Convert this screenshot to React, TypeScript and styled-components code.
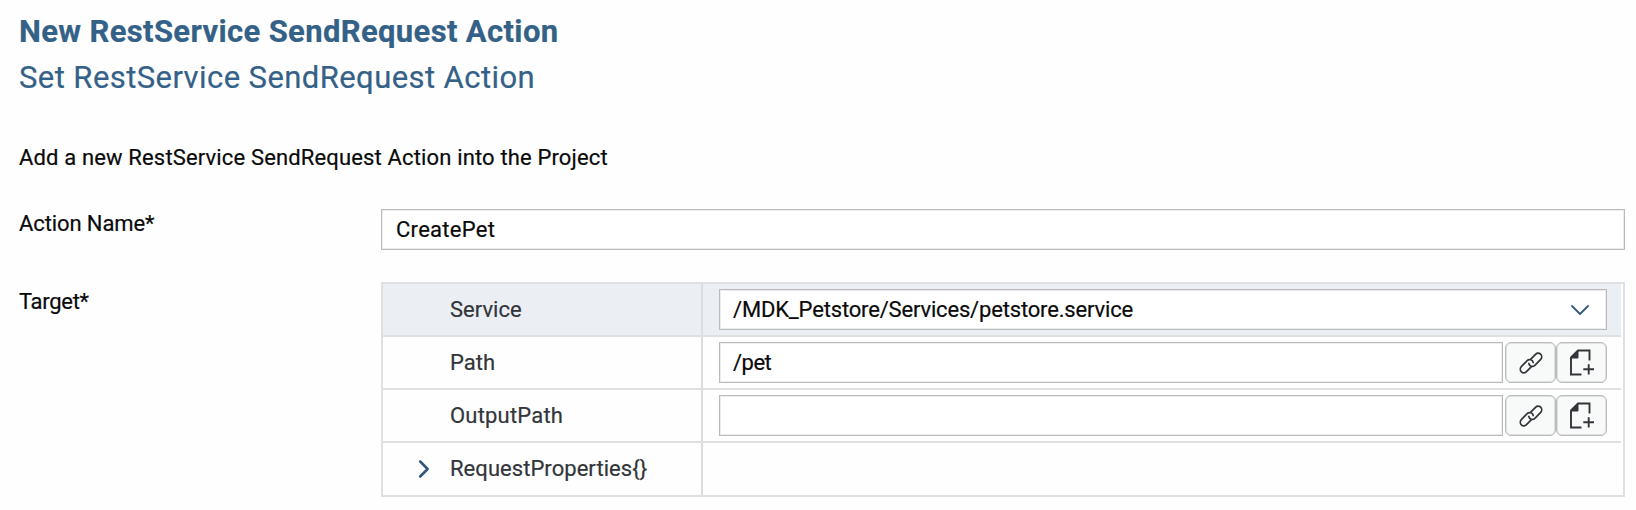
import React from "react";
import styled, { createGlobalStyle } from "styled-components";

const GlobalStyle = createGlobalStyle`
  *, *::before, *::after { box-sizing: border-box; }
  body { margin: 0; background: #fff; }
`;

const Page = styled.main`
  width: 1636px;
  height: 510px;
  padding: 14px 11px 0 19px;
  overflow: hidden;
  background: #fefefe;
  color: #0a0a0a;
  font-family: Roboto, "Liberation Sans", sans-serif;
  font-size: 22px;
  line-height: 26px;
  -webkit-text-stroke: 0.2px currentColor;
`;

const Heading = styled.h1<{ $bold?: boolean; $spacing?: number }>`
  width: max-content;
  margin: 0;
  color: #346187;
  font-size: 31px;
  line-height: 36px;
  font-weight: ${(p) => (p.$bold ? 700 : 400)};
  letter-spacing: ${(p) => p.$spacing ?? 0}px;
  & + & { margin-top: 10px; }
`;

const Label = styled.span<{ $spacing?: number }>`
  display: inline-block;
  white-space: pre;
  letter-spacing: ${(p) => p.$spacing ?? 0}px;
`;

const Description = styled.p`
  margin: 49px 0 0;
`;

const FormRow = styled.div<{ $gap: number }>`
  display: grid;
  grid-template-columns: 362px 1244px;
  align-items: start;
  margin-top: ${(p) => p.$gap}px;
`;

const Caption = styled.div<{ $top: number }>`
  padding-top: ${(p) => p.$top}px;
`;

const Field = styled.div<{ $indent?: number }>`
  display: flex;
  flex: 1;
  align-items: center;
  justify-content: space-between;
  height: 41px;
  padding: 0 17px 0 ${(p) => p.$indent ?? 13}px;
  border: 1px solid #b9bbbc;
  box-shadow: inset 0 0 0 1px #ececec;
  background: #fff;
`;

const Table = styled.div`
  margin-top: 1px;
  border: 2px solid #dfe0e1;
  height: 215px;
`;

const Row = styled.div<{ $active?: boolean }>`
  display: grid;
  grid-template-columns: 318px 1fr;
  width: 1238px;
  height: 53px;
  border-bottom: 2px solid #dfe0e1;
  background: ${(p) => (p.$active ? "#ebeff4" : "transparent")};
  &:last-child { height: 52px; border-bottom: 0; }
`;

const NameCell = styled.div`
  display: grid;
  grid-template-columns: 67px auto;
  align-items: center;
  justify-content: start;
  color: #32363a;
`;

const ValueCell = styled.div`
  display: flex;
  align-items: center;
  padding: 0 14px 0 16px;
  border-left: 2px solid #dcdddf;
`;

const Tools = styled.div`
  display: flex;
  margin-left: 2px;
`;

const ToolButton = styled.button`
  display: grid;
  place-items: center;
  width: 51px;
  height: 41px;
  padding: 0;
  border: 1px solid #b9bbbc;
  border-radius: 6px;
  box-shadow: inset 0 0 0 1px #dfe0e0;
  background: #f8faf9;
`;

const Expander = styled.span`
  display: flex;
  padding-left: 35px;
`;

const LinkIcon = () => (
  <svg width="26" height="26" viewBox="-13 -13 26 26" fill="none" stroke="#32363a" strokeWidth="1.7" strokeLinecap="round">
    <g transform="rotate(-46)">
      <path d="M2.6 -2.8H9.4A3.6 3.6 0 0 1 9.4 4.4H1A3.6 3.6 0 0 1 -1.9 -1.3" />
      <path d="M-2.6 2.8H-9.4A3.6 3.6 0 0 1 -9.4 -4.4H-1A3.6 3.6 0 0 1 1.9 1.3" />
    </g>
  </svg>
);

const AddDocumentIcon = () => (
  <svg width="26" height="27" viewBox="0 0 26 27" fill="none" stroke="#32363a" strokeWidth="1.9">
    <path d="M12.5 25.5H2V8.5L9 1.5H20.5V11.5M14.3 20.3H25M19.7 15.2V25.4" />
    <path d="M2 9L9 1.8V9Z" fill="#32363a" strokeWidth="1" />
  </svg>
);

const ChevronDown = () => (
  <svg width="18" height="10" viewBox="0 0 18 10" fill="none" stroke="#33597d" strokeWidth="1.8" strokeLinecap="round" strokeLinejoin="round">
    <path d="M1 1L9 9L17 1" />
  </svg>
);

const ChevronRight = () => (
  <svg width="12" height="18" viewBox="0 0 12 18" fill="none" stroke="#2f567b" strokeWidth="2.5" strokeLinecap="round" strokeLinejoin="round">
    <path d="M2.2 1.5L9.6 9L2.2 16.5" />
  </svg>
);

const LinkTools = () => (
  <Tools>
    <ToolButton aria-label="Link"><LinkIcon /></ToolButton>
    <ToolButton aria-label="Create"><AddDocumentIcon /></ToolButton>
  </Tools>
);

export default function App() {
  return (
    <>
      <GlobalStyle />
      <Page>
        <Heading $bold $spacing={0.35}>New RestService SendRequest Action</Heading>
        <Heading as="h2" $spacing={0.42}>Set RestService SendRequest Action</Heading>
        <Description>
          <Label $spacing={0.15}>Add a new RestService SendRequest Action into the Project</Label>
        </Description>
        <FormRow $gap={38}>
          <Caption $top={2}><Label $spacing={-0.1}>Action Name*</Label></Caption>
          <Field $indent={14}><Label $spacing={0.28}>CreatePet</Label></Field>
        </FormRow>
        <FormRow $gap={31}>
          <Caption $top={8}><Label $spacing={-0.3}>Target*</Label></Caption>
          <Table>
            <Row $active>
              <NameCell><span /><Label>Service</Label></NameCell>
              <ValueCell>
                <Field><Label $spacing={-0.17}>/MDK_Petstore/Services/petstore.service</Label><ChevronDown /></Field>
              </ValueCell>
            </Row>
            <Row>
              <NameCell><span /><Label>Path</Label></NameCell>
              <ValueCell><Field><Label $spacing={-0.5}>/pet</Label></Field><LinkTools /></ValueCell>
            </Row>
            <Row>
              <NameCell><span /><Label $spacing={0.2}>OutputPath</Label></NameCell>
              <ValueCell><Field /><LinkTools /></ValueCell>
            </Row>
            <Row>
              <NameCell><Expander><ChevronRight /></Expander><Label $spacing={0.05}>{"RequestProperties{}"}</Label></NameCell>
              <ValueCell />
            </Row>
          </Table>
        </FormRow>
      </Page>
    </>
  );
}
